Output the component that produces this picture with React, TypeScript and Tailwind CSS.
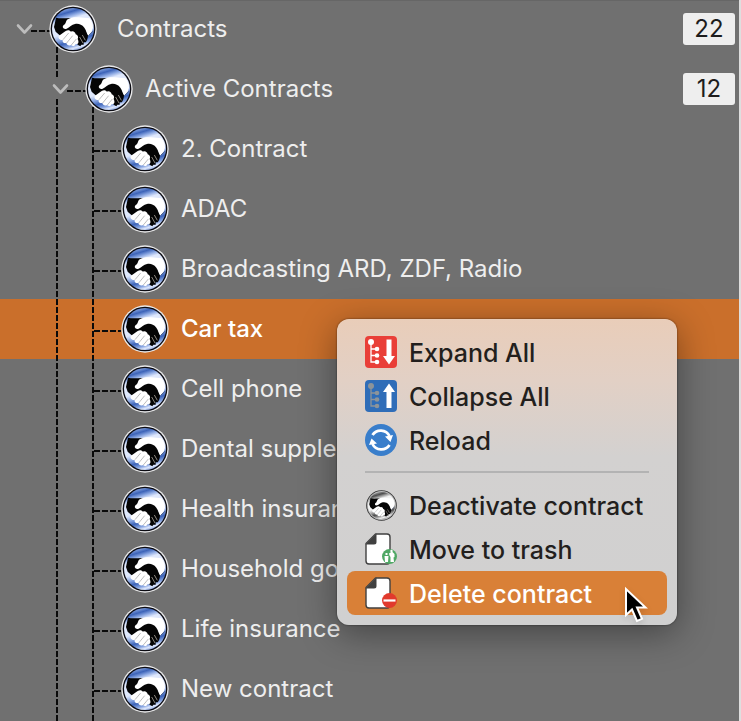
import { useId } from "react";
import type { ReactNode } from "react";

function Handshake({ mono = false, className }: { mono?: boolean; className: string }) {
  const id = useId();
  const dark = mono ? "#4c4c4c" : "#3c63b8";
  const mid = mono ? "#a4a4a4" : "#8aa7e2";
  const light = mono ? "#f2f2f2" : "#dfe8fc";
  return (
    <svg viewBox="0 0 144 144" className={className} aria-hidden="true">
      <defs>
        <linearGradient id={id} x1="0.3" y1="0" x2="0.6" y2="1">
          <stop offset="0.02" stopColor={mid} />
          <stop offset="0.12" stopColor={dark} />
          <stop offset="0.2" stopColor={mid} />
          <stop offset="0.28" stopColor={light} />
          <stop offset="0.56" stopColor={light} />
          <stop offset="0.68" stopColor={mid} />
          <stop offset="0.78" stopColor={dark} />
          <stop offset="0.88" stopColor={mid} />
          <stop offset="0.94" stopColor={light} />
          <stop offset="1" stopColor={mid} />
        </linearGradient>
      </defs>
      <circle cx="72" cy="72" r="71" fill={mono ? "#333" : "#e9e9ea"} />
      <circle cx="72" cy="72" r="67" fill={mono ? "#bbb" : "#0b0b12"} />
      <circle cx="72" cy="72" r="63" fill={`url(#${id})`} />
      <path d="M15 66 21 38C34 42 50 39 64 39L90 48 108 66 117 90C117 100 114 107 110 112L104 112 104 119 97 119 94 124 86 119 80 108 62 88 38 96 20 80Z" fill="#050505" />
      <path d="M54 44C66 36 80 36 90 37L122 40C128 48 131 57 132 68L128 80 118 92C113 86 112 76 106 68 98 58 88 55 78 57 68 59 62 67 53 71 43 74 38 66 44 60 50 58 50 50 54 44Z" fill="#fff" />
      <path d="M50 78C57 73 63 76 66 80 73 77 79 82 80 88 87 90 89 97 86 102L88 107C90 114 85 119 80 117 78 124 70 125 66 120 60 124 53 120 52 114 45 116 39 111 41 105 33 106 25 99 30 92Z" fill="#fff" />
      <path d="M42 104 59 84M53 114 71 92M67 120 82 102" stroke="#9a9a9a" strokeWidth="2" fill="none" />
      <path d="M92 96 102 114M100 90 109 106" stroke="#8d8880" strokeWidth="3" fill="none" />
      <path d="M118 92 132 79" stroke="#24365f" strokeWidth="2" />
    </svg>
  );
}

function Chevron() {
  return (
    <svg viewBox="0 0 18 12" className="h-3 w-[18px] shrink-0" fill="none" stroke="#bdbdbd" strokeWidth="2.6" strokeLinecap="round" strokeLinejoin="round" aria-hidden="true">
      <path d="m2 2.500 6.500 7 6.500-7" />
    </svg>
  );
}

const hDash = "h-[2px] shrink-0 bg-[repeating-linear-gradient(90deg,#0a0a0a_0_6px,transparent_6px_8px)]";
const vDash = "w-[2px] bg-[repeating-linear-gradient(180deg,#0a0a0a_0_6px,transparent_6px_8px)]";

const contracts = [
  "2. Contract",
  "ADAC",
  "Broadcasting ARD, ZDF, Radio",
  "Car tax",
  "Cell phone",
  "Dental supplement",
  "Health insurance",
  "Household goods",
  "Life insurance",
  "New contract",
];

function Count({ children }: { children: ReactNode }) {
  return (
    <span className="mr-1 ml-auto flex h-8 w-[52px] items-center justify-center rounded-[3px] bg-[#eeeeee] text-[#1d1d1d]">
      {children}
    </span>
  );
}

function TreeIcon({ up = false }: { up?: boolean }) {
  const c = up ? "#8d9499" : "#fff";
  return (
    <svg viewBox="0 0 32 32" className="size-8" aria-hidden="true">
      <rect width="32" height="32" rx="4" fill={up ? "#2f6db8" : "#e93f38"} />
      <path d="M6 6v20h6M6 13h6M6 19.500h6" fill="none" stroke={c} strokeWidth="1.300" />
      <circle cx="6" cy="6" r="3" fill={c} />
      <circle cx="12" cy="13" r="2.300" fill={c} />
      <circle cx="12" cy="19.500" r="2.300" fill={c} />
      <circle cx="12" cy="26" r="2.300" fill={c} />
      <path d={up ? "M24 3.500 30 12h-3.500v16h-5V12H18z" : "M24 28.500 18 20h3.500V3.500h5V20H30z"} fill="#fff" />
    </svg>
  );
}

function ReloadIcon() {
  return (
    <svg viewBox="0 0 32 32" className="size-8" aria-hidden="true">
      <circle cx="16" cy="16" r="16" fill="#397ecb" />
      <path d="M7.500 11A9.800 9.800 0 0 1 24.500 12M24.500 21A9.800 9.800 0 0 1 7.500 20" fill="none" stroke="#fff" strokeWidth="2.800" />
      <path d="M20 12.500l8-1.500-2.500 7zM12 19.500 4 21l2.500-6.500z" fill="#fff" />
    </svg>
  );
}

function PageIcon({ remove = false }: { remove?: boolean }) {
  return (
    <svg viewBox="0 0 32 32" className="size-8" aria-hidden="true">
      <path d="M10.500 1H22a3 3 0 0 1 3 3v24a3 3 0 0 1-3 3H4a3 3 0 0 1-3-3V10.500z" fill="#fff" stroke="#404040" strokeWidth="1.400" strokeLinejoin="round" />
      <path d="M11.500 .6V9a2.500 2.500 0 0 1-2.500 2.500H.6z" fill="#404040" />
      {remove ? (
        <>
          <circle cx="24.500" cy="23.500" r="7.500" fill="#e13a2d" />
          <path d="M18.500 23.500h12" stroke="#fff" strokeWidth="2.200" />
        </>
      ) : (
        <>
          <circle cx="24.500" cy="23.500" r="7.500" fill="#4fa865" />
          <path d="M19.500 23h4l-.5 6h-3zM24 20.500l3-2 2.500 2.500v3l-1 .5.500 4.500h-3.500v-5l-1-1.500zM20.500 20h2v2h-2z" fill="#fff" />
          <circle cx="26.500" cy="18" r="1.200" fill="#fff" />
        </>
      )}
    </svg>
  );
}

function MenuItem({ icon, label, active = false }: { icon: ReactNode; label: string; active?: boolean }) {
  return (
    <button
      type="button"
      role="menuitem"
      className={`flex h-11 w-full items-center gap-3 rounded-lg px-[18px] text-left text-[25px] font-medium whitespace-nowrap ${active ? "bg-[#d98037] text-white" : "text-[#231f1d]"}`}
    >
      <span className="flex size-8 shrink-0 items-center justify-center">{icon}</span>
      <span className="pt-[3px]">{label}</span>
    </button>
  );
}

export default function App() {
  return (
    <div className="relative h-screen overflow-hidden border-r-2 border-[#dedede] bg-[#707070] font-['Inter','Liberation_Sans',sans-serif] text-[24px] text-[#eeeeee]">
      <ul role="tree" className="-mt-px border-t-2 border-[#666666]">
        <li role="treeitem" aria-expanded="true">
          <div className="-mt-0.5 flex h-[60px] items-center pl-4">
            <Chevron />
            <span className={`${hDash} mt-[3px] -mr-2 ml-[-3px] w-[26px]`} />
            <Handshake className="z-10 size-12 shrink-0" />
            <span className="ml-5">Contracts</span>
            <Count>22</Count>
          </div>
          <div className="relative">
            <span className={`${vDash} absolute -top-3 left-14 h-8`} />
            <span className={`${vDash} absolute top-10 -bottom-2 left-14 z-10`} />
            <ul role="group">
              <li role="treeitem" aria-expanded="true">
                <div className="flex h-[60px] items-center pl-[52px]">
                  <Chevron />
                  <span className={`${hDash} mt-[3px] -mr-2 ml-[-3px] w-[26px]`} />
                  <Handshake className="z-10 size-12 shrink-0" />
                  <span className="ml-3">Active Contracts</span>
                  <Count>12</Count>
                </div>
                <div className="relative">
                  <ul role="group">
                    {contracts.map((name) => (
                      <li
                        key={name}
                        role="treeitem"
                        aria-selected={name === "Car tax"}
                        className={`flex h-[60px] items-center pl-[94px] whitespace-nowrap ${name === "Car tax" ? "bg-[#ca6f2b] font-medium text-white" : ""}`}
                      >
                        <span className={`${hDash} mt-[3px] w-[27px]`} />
                        <Handshake className="size-12 shrink-0" />
                        <span className="ml-3">{name}</span>
                      </li>
                    ))}
                  </ul>
                  <span className={`${vDash} absolute -top-3 -bottom-2 left-[92px]`} />
                </div>
              </li>
            </ul>
          </div>
        </li>
      </ul>

      <div
        role="menu"
        className="absolute top-[319px] left-[337px] z-20 w-[340px] rounded-xl bg-[linear-gradient(180deg,#e9cdb9_0%,#e2d0c5_20%,#d3d1d0_45%,#d0d0d0_100%)] px-[10px] pt-[11px] pb-[10px] shadow-[0_8px_36px_rgba(0,0,0,0.4),0_0_2px_rgba(0,0,0,0.6)]"
      >
        <MenuItem icon={<TreeIcon />} label="Expand All" />
        <MenuItem icon={<TreeIcon up />} label="Collapse All" />
        <MenuItem icon={<ReloadIcon />} label="Reload" />
        <hr className="mx-[18px] mt-[9px] mb-[10px] border-t-2 border-[#b3b3b3]" />
        <MenuItem icon={<Handshake mono className="size-[31px]" />} label="Deactivate contract" />
        <MenuItem icon={<PageIcon />} label="Move to trash" />
        <MenuItem icon={<PageIcon remove />} label="Delete contract" active />
      </div>

      <svg viewBox="0 0 26 38" className="absolute top-[586px] left-[624px] z-30 h-[38px] w-[26px] drop-shadow-md" aria-hidden="true">
        <path d="M2 3v26l6-5.500 5 11.500 5-2.200-5-11.300h8.500z" fill="#000" stroke="#fff" strokeWidth="2" />
      </svg>
    </div>
  );
}
